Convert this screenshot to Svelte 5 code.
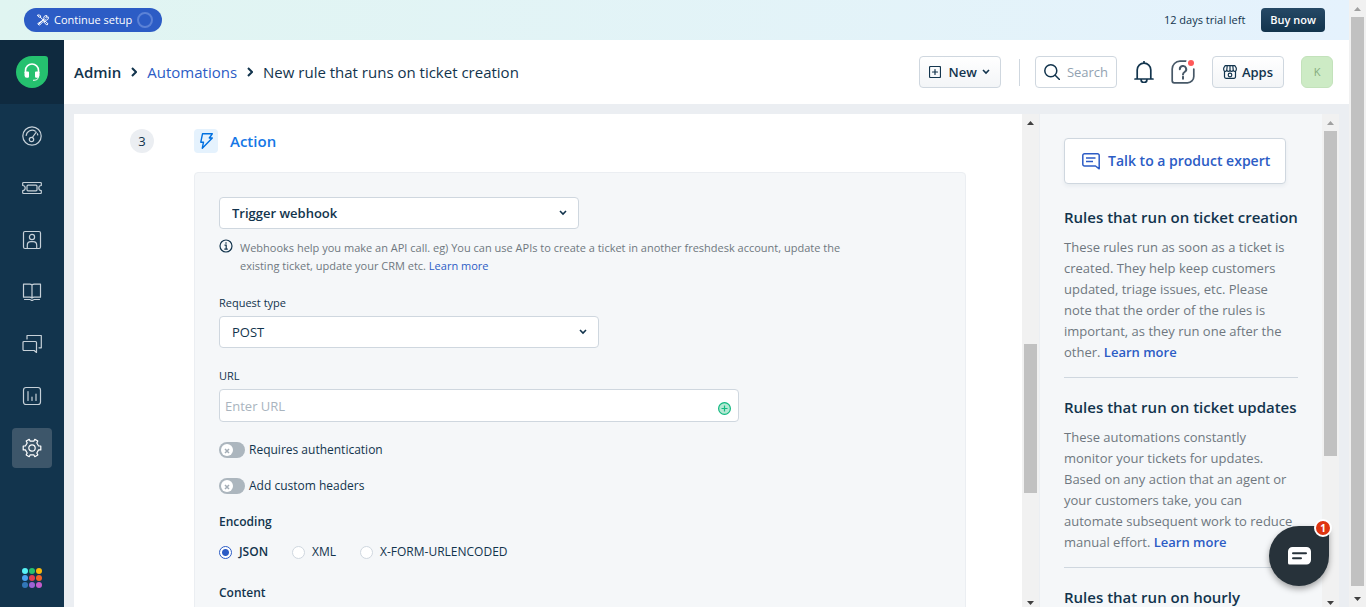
<script>
  let action = $state('Trigger webhook');
  let method = $state('POST');
  let url = $state('');
  let query = $state('');
  let encoding = $state('JSON');
  let toggles = $state([
    { id: 'auth', label: 'Requires authentication', on: false },
    { id: 'headers', label: 'Add custom headers', on: false }
  ]);
  const encodings = ['JSON', 'XML', 'X-FORM-URLENCODED'];
  const appDots = ['#57f3f7', '#26c06f', '#f9b80c', '#4aa3f0', '#e43d51', '#f2632a', '#3177b8', '#9c62d4', '#c45ccb'];
  const tips = [
    {
      title: 'Rules that run on ticket creation',
      body: 'These rules run as soon as a ticket is created. They help keep customers updated, triage issues, etc. Please note that the order of the rules is important, as they run one after the other.'
    },
    {
      title: 'Rules that run on ticket updates',
      body: 'These automations constantly monitor your tickets for updates. Based on any action that an agent or your customers take, you can automate subsequent work to reduce manual effort.'
    },
    { title: 'Rules that run on hourly' }
  ];
</script>

{#snippet scrollbar(before, size, after, atTop)}
  <div class="scrollbar" aria-hidden="true">
    <div class="arrow" class:dim={atTop}><svg width="7" height="4" viewBox="0 0 7 4"><path d="M0 4h7L3.500 0z" /></svg></div>
    <div style="flex-grow: {before}"></div>
    <div class="thumb" style="flex-grow: {size}"></div>
    <div style="flex-grow: {after}"></div>
    <div class="arrow"><svg width="7" height="4" viewBox="0 0 7 4"><path d="M0 0h7L3.500 4z" /></svg></div>
  </div>
{/snippet}

{#snippet chevron()}
  <svg class="chevron" width="8" height="6" viewBox="0 0 8 6"><path d="M1 1l3 3 3-3" /></svg>
{/snippet}

<div class="window">
  <div class="page">
    <div class="banner">
      <button class="setup">
        <svg class="line" width="12" height="12" viewBox="0 0 12 12"><path d="M1.300 10.700l5.400-5.400M7 5a2.300 2.300 0 0 1 3-3.200L8.700 3.200l.8.8L11 2.600a2.300 2.300 0 0 1-3.200 3.200L2.500 11.200 1 9.900zM1 1h1.600l1 1v1.200h-1.400l-1.200-1zM3.400 3.200l4 4M7.300 7.600l.7-.6 3 2.800-1.200 1.300-2.700-2.800z" /></svg>
        Continue setup
        <span class="ring"></span>
      </button>
      <span class="trial">12 days trial left</span>
      <button class="buy">Buy now</button>
    </div>

    <div class="shell">
      <nav class="sidebar" aria-label="Main">
        <a class="brand" href="#home" aria-label="Home">
          <svg width="32" height="32" viewBox="0 0 32 32">
            <path d="M16 0h13a3 3 0 0 1 3 3v13a16 16 0 1 1-16-16z" fill="#25c16f" />
            <path d="M9.500 17v-2.500a6.500 6.500 0 0 1 13 0V17" fill="none" stroke="#fff" stroke-width="1.600" />
            <path d="M9 15.500h3a1 1 0 0 1 1 1v4a1.200 1.200 0 0 1-1.200 1.200h-1A2.300 2.300 0 0 1 8.500 19.500V16zM23 15.500h-3a1 1 0 0 0-1 1v4a1.200 1.200 0 0 0 1.200 1.200h1a2.300 2.300 0 0 0 2.300-2.200V16z" fill="#fff" />
            <path d="M22.300 21c0 2.500-2 3.300-5.300 3.300" fill="none" stroke="#fff" />
          </svg>
        </a>
        <a class="item" href="#dashboard" aria-label="Dashboard">
          <svg class="line" width="20" height="20" viewBox="0 0 20 20"><circle cx="10" cy="10" r="9.200" /><path d="M4.200 9.500a6 6 0 0 1 9.200-4.300M15.800 9a6 6 0 0 0-.5-1.300" /><circle cx="9.500" cy="13.500" r="2.200" /><path d="M10.300 11.500l4-5.300" /></svg>
        </a>
        <a class="item" href="#tickets" aria-label="Tickets">
          <svg class="line" width="20" height="20" viewBox="0 0 20 20"><path d="M1.500 4.500h17a.8.8 0 0 1 .8.8v2.200a2.500 2.500 0 0 0 0 5v2.200a.8.8 0 0 1-.8.8h-17a.8.8 0 0 1-.8-.8v-2.200a2.500 2.500 0 0 0 0-5V5.300a.8.800 0 0 1 .8-.8z" /><rect x="5" y="7.200" width="10" height="5.600" rx="1" /></svg>
        </a>
        <a class="item" href="#contacts" aria-label="Contacts">
          <svg class="line" width="20" height="20" viewBox="0 0 20 20"><rect x="1.500" y="1.500" width="17" height="17" rx="1.500" /><circle cx="10" cy="7" r="2.600" /><path d="M5.300 18.500v-3.300a3.500 3.500 0 0 1 3.500-3.500h2.400a3.500 3.500 0 0 1 3.500 3.500v3.300" /></svg>
        </a>
        <a class="item" href="#solutions" aria-label="Solutions">
          <svg class="line" width="20" height="20" viewBox="0 0 20 20"><path d="M10 3c-.6-.6-1.300-.8-2.200-.8H1.500v13h6.300c1 0 1.700.2 2.200.8.500-.6 1.200-.8 2.200-.8h6.300v-13h-6.300c-.9 0-1.600.2-2.200.8zM10 3v13M2.500 17.500h5.300c1 0 1.400 1 2.200 1s1.200-1 2.200-1h5.300" /></svg>
        </a>
        <a class="item" href="#forums" aria-label="Forums">
          <svg class="line" width="20" height="20" viewBox="0 0 20 20"><path d="M5 5V1.500h14.300v12.300H17M2 7.500h11.500a1 1 0 0 1 1 1v10L12.200 16.500H2a1 1 0 0 1-1-1v-7a1 1 0 0 1 1-1z" /></svg>
        </a>
        <a class="item" href="#analytics" aria-label="Analytics">
          <svg class="line" width="20" height="20" viewBox="0 0 20 20"><rect x="1.500" y="1.500" width="17" height="17" rx="2.500" /><path d="M6 5.500v9M10 11v3.500M14 8v6.500" /></svg>
        </a>
        <a class="item active" href="#admin" aria-label="Admin">
          <svg class="line" width="20" height="20" viewBox="0 0 20 20"><path d="M7.200 1.300l1 1.900h3.600l1-1.900 3 1.700-1 2 1.800 3h2.200v3.900h-2.200l-1.800 3.100 1 1.900-3 1.800-1-1.900H8.200l-1 1.900-3-1.800 1-1.900-1.800-3.100H1.200V8h2.200l1.800-3-1-2z" /><circle cx="10" cy="10" r="3.200" /></svg>
        </a>
        <a class="switcher" href="#apps" aria-label="Switch product">
          {#each appDots as color}
            <span class="dot" style="background: {color}"></span>
          {/each}
        </a>
      </nav>

      <div class="main">
        <header>
          <nav class="crumbs" aria-label="Breadcrumb">
            <a class="root" href="#admin">Admin</a>
            <svg width="6" height="10" viewBox="0 0 6 10"><path d="M1 1l4 4-4 4" /></svg>
            <a href="#automations">Automations</a>
            <svg width="6" height="10" viewBox="0 0 6 10"><path d="M1 1l4 4-4 4" /></svg>
            <span>New rule that runs on ticket creation</span>
          </nav>
          <button class="new">
            <svg class="line" width="12" height="12" viewBox="0 0 12 12"><rect x=".5" y=".5" width="11" height="11" rx="1" /><path d="M6 3.500v5M3.500 6h5" /></svg>
            <span>New</span>
            {@render chevron()}
          </button>
          <span class="divider"></span>
          <label class="search">
            <svg class="line" width="16" height="16" viewBox="0 0 16 16"><circle cx="6.800" cy="6.800" r="6" /><path d="M11.200 11.200L15.500 15.500" /></svg>
            <input type="text" aria-label="Search" placeholder="Search" bind:value={query} />
          </label>
          <button class="plain" aria-label="Notifications">
            <svg class="line" width="20" height="22" viewBox="0 0 20 22"><path d="M3.200 17.500V9a6.800 6.800 0 0 1 13.600 0v8.500M1 18h18M10 2V.5M7 18.500a3 3 0 0 0 6 0" /></svg>
          </button>
          <button class="plain help-button" aria-label="Help">
            <svg class="line" width="24" height="24" viewBox="0 0 24 24"><path d="M22.800 9v7.500a6.300 6.300 0 0 1-6.300 6.300H3.200a2 2 0 0 1-2-2V9a7.800 7.800 0 0 1 7.800-7.800h6" /><path d="M8.800 9.300a3.200 3.200 0 1 1 4.800 2.700c-1.100.7-1.600 1.200-1.600 2.600" stroke-width="2" /><path d="M12 16.800v2" stroke-width="2" /></svg>
            <span class="alert"></span>
          </button>
          <button class="apps">
            <svg class="line" width="14" height="14" viewBox="0 0 14 14"><path d="M2.200.7h9.600L13.300 3v1.800a1.500 1.500 0 0 1-3.100 0 1.600 1.600 0 0 1-3.200 0 1.600 1.600 0 0 1-3.200 0 1.500 1.500 0 0 1-3.100 0V3zM4.200.7l-.4 4M9.800.7l.4 4M7 .7v4M1.500 6.500v5.300a1.500 1.500 0 0 0 1.500 1.500h8a1.500 1.500 0 0 0 1.500-1.500V6.500" /><circle cx="7" cy="10" r="1.800" /></svg>
            Apps
          </button>
          <button class="avatar">K</button>
        </header>

        <div class="workspace">
          <main class="editor">
            <section class="step">
              <div class="number">3</div>
              <div class="step-body">
                <div class="step-title">
                  <span class="bolt"><svg width="13" height="16" viewBox="0 0 13 16"><path d="M2.500.8h9.800L9.300 5h3L2.300 15.200l1.200-6H.8z" /></svg></span>
                  <h1>Action</h1>
                </div>
                <form class="card">
                  <div class="select action">
                    <select aria-label="Action" bind:value={action}>
                      <option>Trigger webhook</option>
                    </select>
                    {@render chevron()}
                  </div>
                  <div class="hint">
                    <svg width="14" height="14" viewBox="0 0 14 14"><circle cx="7" cy="7" r="6" /><path d="M5.500 6.200H7.200V10M5.300 10.200h3.500M7 3.300v1.400" /></svg>
                    <p>Webhooks help you make an API call. eg) You can use APIs to create a ticket in another freshdesk account, update the existing ticket, update your CRM etc. <a href="#learn">Learn more</a></p>
                  </div>

                  <div class="field">
                    <label for="method">Request type</label>
                    <div class="select method">
                      <select id="method" bind:value={method}>
                        <option>POST</option>
                      </select>
                      {@render chevron()}
                    </div>
                  </div>

                  <div class="field">
                    <label for="url">URL</label>
                    <div class="url-box">
                      <input id="url" type="text" placeholder="Enter URL" bind:value={url} />
                      <button type="button" aria-label="Insert placeholder">
                        <svg width="13" height="13" viewBox="0 0 13 13"><circle cx="6.500" cy="6.500" r="5.900" /><path d="M6.500 3.500v6M3.500 6.500h6" /></svg>
                      </button>
                    </div>
                  </div>

                  <div class="toggles">
                    {#each toggles as t (t.id)}
                      <label class="toggle">
                        <input type="checkbox" bind:checked={t.on} />
                        <span class="track"><span class="knob"><svg width="6" height="6" viewBox="0 0 6 6"><path d="M1 1l4 4M5 1L1 5" /></svg></span></span>
                        {t.label}
                      </label>
                    {/each}
                  </div>

                  <fieldset>
                    <legend>Encoding</legend>
                    <div class="radios">
                      {#each encodings as e}
                        <label class:chosen={encoding === e}>
                          <input type="radio" name="encoding" value={e} bind:group={encoding} />{e}
                        </label>
                      {/each}
                    </div>
                  </fieldset>
                  <h2>Content</h2>
                </form>
              </div>
            </section>
          </main>
          {@render scrollbar(213, 149, 101, false)}

          <aside>
            <button class="expert">
              <svg width="18" height="17" viewBox="0 0 18 17"><path d="M2.500.8h13a1.700 1.700 0 0 1 1.700 1.700v13.300L13.500 13h-11A1.700 1.700 0 0 1 .8 11.300V2.500A1.700 1.700 0 0 1 2.500.8zM4 5h9.500M4 8.500h7" /></svg>
              Talk to a product expert
            </button>
            {#each tips as tip}
              <section class="tip">
                <h2>{tip.title}</h2>
                {#if tip.body}
                  <p>{tip.body} <a href="#learn">Learn more</a></p>
                {/if}
              </section>
            {/each}
          </aside>
          {@render scrollbar(0, 325, 138, true)}
        </div>
      </div>
    </div>

    <button class="chat" aria-label="Open chat, 1 unread">
      <svg width="23" height="18" viewBox="0 0 23 18"><path d="M4.500 0h14A4.500 4.500 0 0 1 23 4.500V13a4.500 4.500 0 0 1-4.500 4.500h-17A1.500 1.500 0 0 1 0 16V4.500A4.500 4.500 0 0 1 4.500 0z" fill="#fff" /><path d="M5 6.200h13M5 11.200h8" stroke="#27323a" stroke-width="2" stroke-linecap="round" /></svg>
      <span class="count">1</span>
    </button>
  </div>
  {@render scrollbar(0, 569, 4, true)}
</div>

<style>
  :global(body) { margin: 0; }
  .window {
    display: flex;
    height: 100vh;
    overflow: hidden;
    background: #ebeef2;
    color: #12344d;
    font: 13px/18px "Open Sans", "Noto Sans", sans-serif;
  }
  .window *, .window *::before { box-sizing: border-box; }
  button, input, select { font: inherit; color: inherit; }
  button { cursor: pointer; }
  a { color: #2c5cc5; text-decoration: none; }
  h1, h2, p { margin: 0; }
  svg { flex: none; display: block; }
  .line { fill: none; stroke: currentColor; stroke-linejoin: round; stroke-linecap: round; stroke-width: 1.200; }
  .page { position: relative; flex: 1; min-width: 0; display: flex; flex-direction: column; }

  .banner {
    flex: none;
    display: flex;
    align-items: center;
    height: 40px;
    padding: 0 24px;
    background: linear-gradient(90deg, #e0f5f1, #e5f2fd);
    font-size: 11px;
  }
  .setup {
    display: flex;
    align-items: center;
    gap: 5px;
    height: 24px;
    padding: 0 9px 0 13px;
    border: 0;
    border-radius: 12px;
    background: #2c5cc5;
    color: #fff;
  }
  .setup .line { stroke-width: 1; }
  .ring { width: 16px; height: 16px; border: 2px solid #5c82d6; border-radius: 50%; }
  .trial { margin-left: auto; }
  .buy {
    height: 24px;
    margin-left: 16px;
    padding: 0 9px;
    border: 0;
    border-radius: 4px;
    background: linear-gradient(#264966, #12344d);
    color: #fff;
    font-weight: 600;
  }

  .shell { flex: 1; min-height: 0; display: flex; }
  .sidebar {
    flex: none;
    display: flex;
    flex-direction: column;
    align-items: center;
    gap: 12px;
    width: 64px;
    background: #12344d;
  }
  .brand { display: grid; place-items: center; width: 100%; height: 64px; background: #0f2a3f; }
  .item { display: grid; place-items: center; width: 40px; height: 40px; border-radius: 4px; color: #c6d0d8; }
  .item.active { background: #3d566a; color: #fff; }
  .switcher { display: grid; grid-template-columns: repeat(3, 6px); gap: 1px; margin: auto 0 19px; }
  .dot { width: 6px; height: 6px; border-radius: 50%; }

  .main { flex: 1; min-width: 0; display: flex; flex-direction: column; }
  header {
    flex: none;
    display: flex;
    align-items: center;
    height: 64px;
    padding: 0 16px 0 10px;
    background: #fff;
  }
  .crumbs { display: flex; align-items: center; gap: 10px; margin-right: auto; font-size: 15px; }
  .crumbs .root { color: #12344d; font-weight: 600; }
  .crumbs svg { fill: none; stroke: #12344d; stroke-width: 2; }
  .chevron { fill: none; stroke: #12344d; stroke-width: 1.600; }
  .new, .apps {
    display: flex;
    align-items: center;
    height: 32px;
    border: 1px solid #cfd7df;
    border-radius: 4px;
    background: linear-gradient(#fff, #f3f5f7);
    font-weight: 600;
  }
  .new { gap: 5px; padding: 0 10px 0 9px; }
  .new .line { margin-right: 3px; }
  .apps { gap: 5px; margin-left: 17px; padding: 0 10px; }
  .divider { width: 1px; height: 27px; margin: 0 15px 0 18px; background: #cfd7df; }
  .search {
    display: flex;
    align-items: center;
    gap: 7px;
    width: 82px;
    height: 32px;
    padding: 0 8px;
    border: 1px solid #cfd7df;
    border-radius: 4px;
  }
  .search .line { stroke-width: 1.500; }
  .search input { flex: 1; min-width: 0; padding: 0; border: 0; outline: 0; background: none; }
  .search input::placeholder { color: #92a2b1; opacity: 1; }
  .plain { position: relative; display: grid; place-items: center; margin-left: 17px; padding: 0; border: 0; background: none; }
  .plain .line { stroke-width: 1.700; }
  .help-button { color: #475867; }
  .alert { position: absolute; top: 0; right: 1px; width: 6px; height: 6px; border-radius: 50%; background: #ff5959; box-shadow: 0 0 0 2px #fff; }
  .avatar {
    width: 32px;
    height: 32px;
    margin-left: 17px;
    padding: 0;
    border: 1px solid #c3e2bb;
    border-radius: 6px;
    background: #cdebc5;
    color: #86ac7d;
    font-size: 11px;
  }

  /* The panes run a few pixels past the fold of the page. */
  .workspace { flex: 1; min-height: 0; display: flex; margin: 10px 10px -4px; }
  .editor { flex: 1; min-width: 0; overflow: hidden; padding: 15px 56px 0; background: #fff; }
  .step { display: flex; gap: 40px; }
  .number {
    flex: none;
    width: 24px;
    height: 24px;
    border-radius: 50%;
    background: #ebeef2;
    line-height: 24px;
    text-align: center;
  }
  .step-body { flex: 1; min-width: 0; }
  .step-title { display: flex; align-items: center; gap: 12px; height: 24px; margin-bottom: 19px; }
  .bolt { display: grid; place-items: center; width: 24px; height: 24px; border-radius: 4px; background: #e5f2fd; }
  .bolt svg { fill: none; stroke: #0070e0; stroke-width: 1.400; stroke-linejoin: round; }
  h1 { color: #1577e6; font-size: 15px; line-height: 26px; font-weight: 600; }
  .card { padding: 24px; border: 1px solid #ebeef2; border-radius: 4px; background: #f5f7f9; }
  .select { position: relative; max-width: 100%; }
  .select.action { width: 360px; font-weight: 600; }
  .select.method { width: 380px; }
  select {
    appearance: none;
    display: block;
    width: 100%;
    height: 32px;
    padding: 0 32px 0 12px;
    border: 1px solid #cfd7df;
    border-radius: 4px;
    background: #fff;
  }
  .select .chevron { position: absolute; top: 13px; right: 12px; pointer-events: none; }
  .hint { display: flex; gap: 7px; margin-top: 10px; color: #6f7780; font-size: 11px; }
  .hint p { max-width: 630px; }
  .hint svg { fill: none; stroke: #12344d; stroke-width: 1.200; }
  .field { margin-top: 19px; }
  .field > label { display: block; margin-bottom: 4px; font-size: 11px; }
  .url-box {
    display: flex;
    align-items: center;
    width: 520px;
    max-width: 100%;
    height: 33px;
    padding: 0 7px 0 5px;
    border: 1px solid #cfd7df;
    border-radius: 4px;
    background: #fff;
  }
  .url-box input { flex: 1; min-width: 0; padding: 0; border: 0; outline: 0; background: none; }
  .url-box input::placeholder { color: #a9b4be; opacity: 1; }
  .url-box button { padding: 5px 0 0; border: 0; background: none; }
  .url-box svg { fill: #b5e8d3; stroke: #12b981; stroke-width: 1.200; }
  .toggles { display: grid; gap: 20px; margin-top: 20px; }
  .toggle { display: flex; align-items: center; gap: 4px; height: 16px; font-size: 12px; line-height: 20px; }
  .toggle input { position: absolute; opacity: 0; }
  .track { display: flex; width: 26px; height: 16px; padding: 2px; border-radius: 8px; background: #acb6be; }
  .toggle input:checked + .track { justify-content: flex-end; background: #12b981; }
  .knob { display: grid; place-items: end center; width: 12px; height: 12px; padding-bottom: 2px; border-radius: 50%; background: #fff; }
  .knob svg { fill: none; stroke: #a3adb6; stroke-width: 1.500; }
  fieldset { margin: 19px 0 0; padding: 0; border: 0; }
  legend, .card h2 { padding: 0; font-size: 12px; line-height: 18px; font-weight: 600; }
  .radios { display: flex; gap: 24px; margin-top: 12px; font-size: 12px; }
  .radios label { display: flex; align-items: center; gap: 7px; }
  .radios .chosen { font-weight: 600; }
  .radios input { appearance: none; width: 13px; height: 13px; margin: 0; border: 1px solid #cfd7df; border-radius: 50%; background: #fff; }
  .radios input:checked { border-color: #2c5cc5; background: radial-gradient(#2c5cc5 3px, #fff 4px); }
  .card h2 { margin-top: 23px; }

  aside {
    flex: none;
    width: 283px;
    overflow: hidden;
    padding: 24px 24px 0;
    border-left: 1px solid #ebeef2;
    background: #f5f7f9;
  }
  .expert {
    display: flex;
    align-items: center;
    gap: 8px;
    height: 46px;
    margin-bottom: 23px;
    padding: 0 15px 0 17px;
    border: 1px solid #cfd7df;
    border-radius: 4px;
    background: #fff;
    box-shadow: 0 2px 4px #12344d0f;
    color: #2c5cc5;
    font-size: 14px;
    font-weight: 600;
    white-space: nowrap;
  }
  .expert svg { fill: none; stroke: #2c5cc5; stroke-width: 1.500; stroke-linejoin: round; }
  .tip { padding-bottom: 14px; line-height: 21px; }
  .tip + .tip { padding-top: 19px; border-top: 1px solid #cfd7df; }
  .tip h2 { margin-bottom: 9px; font-size: 15px; font-weight: 600; white-space: nowrap; }
  .tip p { color: #6f7780; }
  .tip a { font-weight: 600; }

  .scrollbar { flex: none; display: flex; flex-direction: column; align-items: center; width: 17px; background: #f1f1f1; }
  .arrow { flex: none; display: grid; place-items: center; height: 17px; }
  .arrow svg { fill: #404040; }
  .arrow.dim svg { fill: #a0a0a0; }
  .thumb { width: 13px; background: #c1c1c1; }

  .chat {
    position: absolute;
    right: 20px;
    bottom: 21px;
    display: grid;
    place-items: center;
    width: 60px;
    height: 60px;
    padding: 0;
    border: 0;
    border-radius: 30px 4px 30px 30px;
    background: #27323a;
    box-shadow: 0 3px 6px #00000059;
  }
  .count {
    position: absolute;
    top: -7px;
    right: -3px;
    width: 18px;
    height: 18px;
    border: 2px solid #fff;
    border-radius: 50%;
    background: #df3410;
    color: #fff;
    font-size: 10px;
    line-height: 14px;
    font-weight: 700;
    text-align: center;
  }
</style>
